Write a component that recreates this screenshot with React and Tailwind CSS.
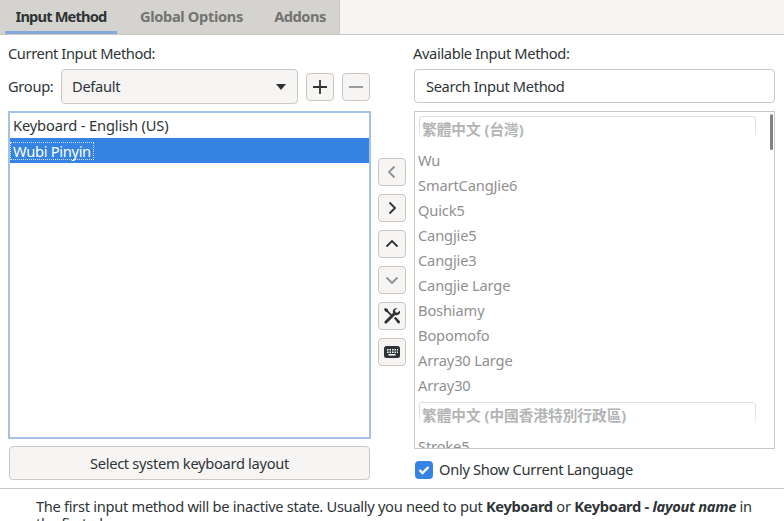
import React from 'react';

const Btn = ({ children, dim }) => (
  <div className={`w-[28px] h-[28px] flex items-center justify-center rounded-[4px] border border-[#cdc7c2] bg-[#f6f5f4] ${dim ? 'text-[#8f9091]' : 'text-[#2e3436]'}`}>
    {children}
  </div>
);
const Chevron = ({ d }) => (
  <svg width="16" height="16" viewBox="0 0 16 16" fill="none" stroke="currentColor" strokeWidth="1.8"><path d={d} /></svg>
);
const rows1 = ['Wu', 'SmartCangJie6', 'Quick5', 'Cangjie5', 'Cangjie3', 'Cangjie Large', 'Boshiamy', 'Bopomofo', 'Array30 Large', 'Array30'];

const Header = ({ children }) => (
  <div className="relative h-[27px] mt-[4px] ml-[4px] w-[337px] pl-[3px] font-bold text-[#b3b5b5] leading-[26px] tracking-normal">
    <div className="absolute inset-0 border-t border-x border-[#dedddb] rounded-t-[3px] [mask-image:linear-gradient(to_bottom,black_40%,transparent_90%)]" />
    {children}
  </div>
);
const Row = ({ children }) => <div className="h-[25px] leading-[25px] pl-[3px] tracking-[-0.15px]">{children}</div>;

export default function App() {
  return (
    <div className="w-[784px] h-[521px] overflow-hidden bg-white text-[#2e3436] text-[14.67px] tracking-[-0.3px] leading-[20px]" style={{ fontFamily: '"Noto Sans", "Noto Sans CJK TC", sans-serif' }}>
      <div className="h-[35px] bg-[#f6f5f4] border-b border-[#cdc7c2]">
        <div className="w-[340px] h-[34px] bg-[#d5d3d0] border-r border-[#cdc7c2] flex pl-[5px] font-bold">
          <div className="w-[112px] h-[34px] border-b-[3px] border-[#84a9dc] flex items-center justify-center pt-[1px] tracking-[-0.85px]">Input Method</div>
          <div className="ml-[13px] w-[123px] flex items-center justify-center pb-[2px] text-[#73736f] tracking-[-0.35px]">Global Options</div>
          <div className="ml-[11px] w-[72px] flex items-center justify-center pb-[2px] text-[#73736f] tracking-[-0.5px]">Addons</div>
        </div>
      </div>

      <div className="flex h-[454px] border-b border-[#cdc7c2]">
        <div className="w-[362px] ml-[8px] flex flex-col">
          <div className="h-[34px] pt-[8px] tracking-[-0.4px]">Current Input Method:</div>
          <div className="h-[35px] flex items-center">
            <span className="w-[53px] mb-[2px]">Group:</span>
            <div className="w-[237px] h-[35px] rounded-[4px] border border-[#cdc7c2] bg-[#f6f5f4] flex items-center justify-between pl-[10px] pr-[10px]">
              <span className="mb-[2px]">Default</span>
              <svg width="12" height="6" viewBox="0 0 12 6" fill="#2e3436"><path d="M1 0h10L6 6z" /></svg>
            </div>
            <div className="ml-[8px]"><Btn><svg width="16" height="16" viewBox="0 0 16 16" stroke="currentColor" strokeWidth="1.8"><path d="M8 1v14M1 8h14" /></svg></Btn></div>
            <div className="ml-[8px]"><Btn dim><svg width="16" height="16" viewBox="0 0 16 16" stroke="currentColor" strokeWidth="1.8"><path d="M1 8h14" /></svg></Btn></div>
          </div>
          <div className="mt-[7px] h-[328px] w-[363px] border-2 border-[#a6c1e6] bg-white">
            <div className="h-[25px] leading-[25px] pl-[3px] tracking-[-0.15px]">Keyboard - English (US)</div>
            <div className="h-[25px] bg-[#3584e4] text-white flex items-center">
              <span className="h-[18px] leading-[16px] pl-[2px] pr-[2px] border border-dotted border-[#cfe0f7]">Wubi Pinyin</span>
            </div>
          </div>
          <div className="mt-[7px] ml-[1px] w-[361px] h-[34px] rounded-[4px] border border-[#cdc7c2] bg-[#f6f5f4] flex items-center justify-center">Select system keyboard layout</div>
        </div>

        <div className="w-[28px] ml-[8px] pt-[123px] flex flex-col gap-[8px]">
          <Btn dim><Chevron d="M10.5 2.5 5 8l5.500 5.500" /></Btn>
          <Btn><Chevron d="M5.500 2.500 11 8l-5.500 5.500" /></Btn>
          <Btn><Chevron d="M2.500 10.500 8 5l5.500 5.500" /></Btn>
          <Btn dim><Chevron d="M2.500 5.500 8 11l5.500-5.500" /></Btn>
          <Btn>
            <svg width="18" height="18" viewBox="0 0 18 18" fill="currentColor">
              <path d="M2.200 1 1 2.200l1.200 2.300 1.900.7 4.300 4.300 1.300-1.300-4.300-4.300-.7-1.900z" />
              <path d="M13.500 1a3.700 3.700 0 0 0-3.500 4.900L1.700 14.200a1.500 1.500 0 0 0 2.100 2.100L12.100 8a3.700 3.700 0 0 0 4.800-4.600l-2.500 2.400-2-.6-.5-2L14.300 1.100z" />
              <path d="m11 11.300 1.500-1.500 4.200 4.200a1.500 1.500 0 0 1-2.100 2.100z" />
            </svg>
          </Btn>
          <Btn>
            <svg width="16" height="12" viewBox="0 0 16 12">
              <rect width="16" height="12" rx="2.500" fill="currentColor" />
              <path d="M3 3h1.500v1.500H3zM5.500 3H7v1.500H5.500zM8 3h1.500v1.500H8zM10.500 3H12v1.500h-1.500zM13 3h1v1.500h-1zM3 5.500h1.500V7H3zM5.500 5.500H7V7H5.500zM8 5.500h1.500V7H8zM10.500 5.500H12V7h-1.500zM13 5.500h1V7h-1zM4.500 8h7v1.500h-7z" fill="#fff" />
            </svg>
          </Btn>
        </div>

        <div className="w-[361px] ml-[8px] flex flex-col">
          <div className="h-[34px] pt-[8px] -ml-px tracking-[-0.35px]">Available Input Method:</div>
          <div className="h-[34px] rounded-[4px] border border-[#cdc7c2] flex items-center pl-[11px] tracking-[-0.35px]">Search Input Method</div>
          <div className="relative mt-[8px] h-[338px] border border-[#cdc7c2] overflow-hidden text-[#8f9091]">
            <Header>繁體中文 (台灣)</Header>
            <div className="mt-[5px]">
              {rows1.map((r) => <Row key={r}>{r}</Row>)}
            </div>
            <Header>繁體中文 (中國香港特別行政區)</Header>
            <div className="mt-[5px]"><Row>Stroke5</Row></div>
            <div className="absolute right-[1px] top-[2px] w-[3px] h-[36px] rounded-full bg-[#7e8285]" />
          </div>
          <div className="mt-[10px] ml-[1px] flex items-center">
            <div className="w-[18px] h-[18px] rounded-[4px] bg-[#3584e4] flex items-center justify-center">
              <svg width="14" height="14" viewBox="0 0 14 14" fill="none" stroke="#fff" strokeWidth="2.400"><path d="m2.500 7 3 3 6-6" /></svg>
            </div>
            <span className="ml-[6px] mb-[2px]">Only Show Current Language</span>
          </div>
        </div>
      </div>

      <div className="pl-[36px] pt-[9px] w-[770px] leading-[17px]">
        The first input method will be inactive state. Usually you need to put <b>Keyboard</b> or <b>Keyboard - <i>layout name</i></b> in the first place.
      </div>
    </div>
  );
}
